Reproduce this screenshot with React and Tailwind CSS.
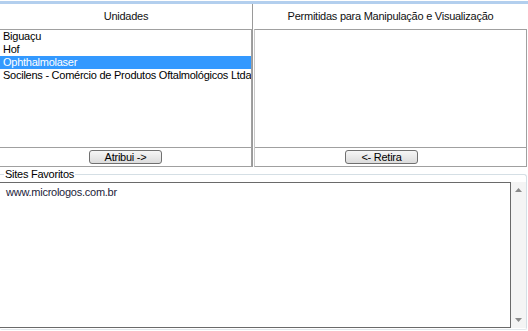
export default function App() {
  const items = ["Biguaçu", "Hof", "Ophthalmolaser", "Socilens - Comércio de Produtos Oftalmológicos Ltda"];
  const btn =
    "h-[14px] w-[73px] rounded-[3px] border border-[#707070] bg-gradient-to-b from-[#f6f6f6] to-[#dcdcdc] text-[11px] leading-[12px] tracking-[-0.25px] text-black";
  return (
    <div className="relative h-[331px] w-[528px] overflow-hidden bg-white font-['Liberation_Sans',sans-serif] text-[11px] tracking-[-0.25px] text-black">
      <div className="mt-px h-[3px] bg-[#b3cfee]" />
      <div className="flex h-[163px]">
        {/* left panel */}
        <div className="flex w-[252px] flex-col">
          <div className="flex h-[25px] items-center justify-center text-[#111]">Unidades</div>
          <div className="flex flex-1 flex-col border-y border-r border-[#a0a0a0]">
            <div className="flex h-[118px] flex-col overflow-hidden border-b border-[#a0a0a0]">
              {items.map((t, i) => (
                <div
                  key={t}
                  className={
                    "flex h-[13px] items-center whitespace-nowrap pl-[3px] leading-[13px] " +
                    (i === 2 ? "bg-[#3399ff] text-white" : "")
                  }
                >
                  {t}
                </div>
              ))}
            </div>
            <div className="flex flex-1 items-center">
              <button className={"ml-[89px] " + btn}>Atribui -&gt;</button>
            </div>
          </div>
        </div>
        {/* splitter */}
        <div className="w-px bg-[#9a9a9a]" />
        <div className="w-px bg-white" />
        {/* right panel */}
        <div className="flex w-[273px] flex-col">
          <div className="flex h-[25px] items-center justify-center text-[#111]">
            Permitidas para Manipulação e Visualização
          </div>
          <div className="flex flex-1 flex-col border border-[#a0a0a0] border-l-[#c8c8c8]">
            <div className="h-[118px] border-b border-[#a0a0a0]" />
            <div className="flex flex-1 items-center">
              <button className={"ml-[90px] " + btn}>&lt;- Retira</button>
            </div>
          </div>
        </div>
      </div>
      {/* group box */}
      <div className="flex h-[15px] items-center">
        <div className="h-px w-[4px] bg-[#d5dfe5]" />
        <span className="px-[1px] leading-[13px]">Sites Favoritos</span>
        <div className="mr-px mt-[7px] h-[8px] flex-1 rounded-tr-[3px] border-r border-t border-[#d5dfe5]" />
      </div>
      <div className="mr-px flex h-[146px] border-r border-[#d5dfe5]">
        <div className="w-[511px] border-y border-r border-[#6a6a6a] pl-[6px] pt-[3px] leading-[13px] text-[#1c1c3a]">
          www.micrologos.com.br
        </div>
        <div className="flex w-[15px] flex-col items-center justify-between bg-[#f4f4f4] py-[6px]">
          <svg width="7" height="4" viewBox="0 0 7 4">
            <path d="M3.5 0 L7 4 L0 4 Z" fill="#8a8a8a" />
          </svg>
          <svg width="7" height="4" viewBox="0 0 7 4">
            <path d="M0 0 L7 0 L3.5 4 Z" fill="#8a8a8a" />
          </svg>
        </div>
      </div>
      <div className="mr-px h-[2px] rounded-b-[2px] border-b border-r border-[#e3e8ec]" />
    </div>
  );
}
